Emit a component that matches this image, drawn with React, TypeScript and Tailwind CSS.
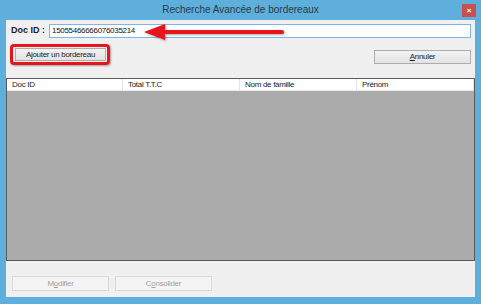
import React from 'react';

const ui = { fontFamily: '"Liberation Sans", Arial, sans-serif' };

function WinButton({ children, disabled = false, className = '' }: { children: React.ReactNode; disabled?: boolean; className?: string }) {
  return (
    <div
      className={`flex items-center justify-center text-[8px] tracking-[-0.3px] leading-none border ${
        disabled
          ? 'border-[#dadada] bg-[#f4f4f4] text-[#a3a3a3]'
          : 'border-[#adadad] bg-gradient-to-b from-[#f2f2f2] to-[#e3e3e3] text-[#1e1e1e]'
      } ${className}`}
    >
      {children}
    </div>
  );
}

export default function App() {
  const columns = ['Doc ID', 'Total T.T.C', 'Nom de famille', 'Prénom'];

  return (
    <div className="relative w-[481px] h-[304px] bg-[#5eafdc] flex flex-col overflow-hidden" style={ui}>
      {/* Title bar */}
      <div className="relative h-[20px] flex items-center justify-center">
        <span className="text-[10px] text-[#2a3a48] leading-none">Recherche Avancée de bordereaux</span>
        <div className="absolute right-[5px] top-[4px] w-[14px] h-[13px] bg-[#c75050] flex items-center justify-center text-white text-[8px] font-bold leading-none">
          ×
        </div>
      </div>

      {/* Client area */}
      <div className="mx-[6px] h-[277px] bg-[#f0f0f0] flex flex-col border-b border-[#e8f2f8]">
        {/* Doc ID row */}
        <div className="mt-[4px] h-[14px] flex items-start">
          <span className="ml-[5px] w-[38px] text-[9px] font-bold text-[#1a1a1a] leading-none pt-[2px]">Doc ID :</span>
          <div className="flex-1 mr-[4px] h-[14px] border border-[#7eb4ea] bg-white flex items-center pl-[2px] text-[8px] tracking-[-0.3px] text-[#111]">
            15055466666076035214
          </div>
        </div>

        {/* Buttons row */}
        <div className="mt-[6px] h-[22px] flex items-start">
          <div className="ml-[4px] w-[100px] h-[21px] rounded-[4px] border-[3px] border-[#e8141c] shadow-[1px_1px_2px_rgba(0,0,0,0.35)] p-[1px] pl-[2px]">
            <WinButton className="w-full h-full">Ajouter un bordereau</WinButton>
          </div>
          <WinButton className="ml-auto mr-[4px] mt-[6px] w-[97px] h-[14px]">
            <span><span className="underline">A</span>nnuler</span>
          </WinButton>
        </div>

        {/* Grid */}
        <div className="mt-[12px] h-[183px] border border-[#5a5a5a] bg-[#ababab] flex flex-col">
          <div className="h-[12px] bg-white grid grid-cols-[116px_117px_117px_1fr] border-b border-[#e9e9e9]">
            {columns.map((c) => (
              <div key={c} className="border-r border-[#e5e5e5] pl-[5px] text-[8px] tracking-[-0.3px] text-[#1a1a1a] leading-[12px]">
                {c}
              </div>
            ))}
          </div>
        </div>

        {/* Bottom buttons */}
        <div className="mt-[15px] ml-[6px] flex gap-[6px]">
          <WinButton disabled className="w-[97px] h-[15px]">
            <span>M<span className="underline">o</span>difier</span>
          </WinButton>
          <WinButton disabled className="w-[97px] h-[15px]">
            <span>C<span className="underline">o</span>nsolider</span>
          </WinButton>
        </div>
      </div>

      {/* Red arrow annotation */}
      <svg className="absolute left-0 top-0 pointer-events-none" width="481" height="304" viewBox="0 0 481 304">
        <g style={{ filter: 'drop-shadow(1px 1px 1px rgba(0,0,0,0.35))' }}>
          <line x1="162" y1="32" x2="282" y2="32" stroke="#e8141c" strokeWidth="4" strokeLinecap="round" />
          <polygon points="144,32 165,24 165,40" fill="#e8141c" />
        </g>
      </svg>
    </div>
  );
}
